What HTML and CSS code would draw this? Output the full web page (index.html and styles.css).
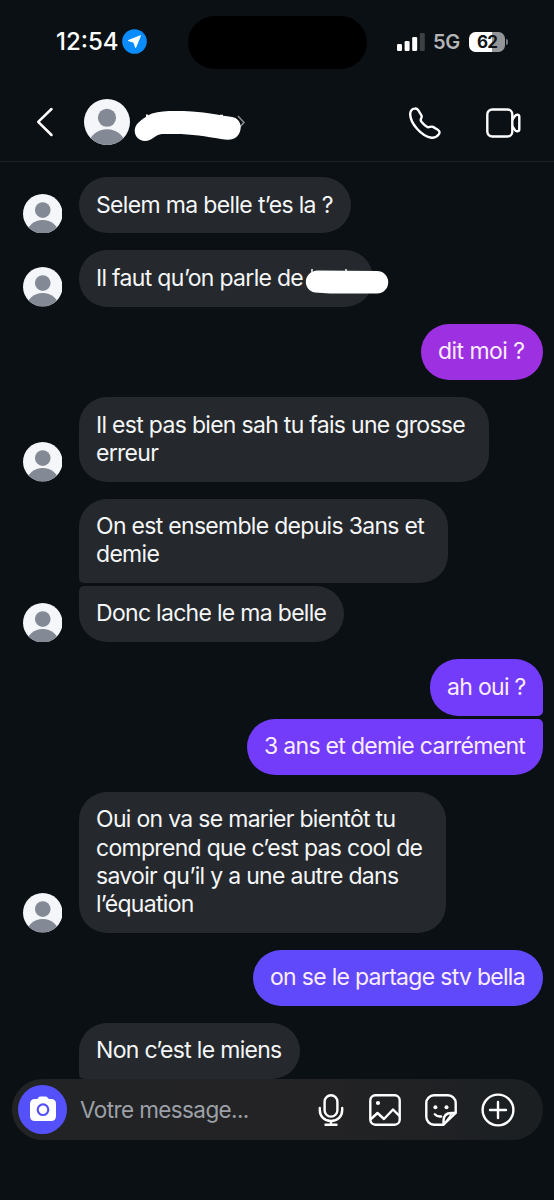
FILE: index.html
```html
<!DOCTYPE html>
<html lang="fr">
<head>
<meta charset="utf-8">
<title>Messages</title>
<link rel="stylesheet" href="styles.css">
</head>
<body>
<svg class="defs" width="0" height="0" aria-hidden="true">
  <symbol id="avatar" viewBox="0 0 40 40">
    <clipPath id="disc"><circle cx="20" cy="20" r="20"/></clipPath>
    <g clip-path="url(#disc)">
      <rect width="40" height="40" fill="#f4f6f9"/>
      <circle cx="20" cy="16.3" r="7.900" fill="#848996"/>
      <ellipse cx="20" cy="40" rx="16" ry="13.600" fill="#848996"/>
    </g>
  </symbol>
</svg>
<div class="screen">
  <div class="status">
    <span class="time">12:54</span>
    <svg class="location" viewBox="0 0 25 25"><circle cx="12.5" cy="12.5" r="12.3" fill="#0a8cff"/><path d="M18.500 6.700 13.600 18.600 11.900 13.300 6.200 11.600Z" fill="#fff" stroke="#fff" stroke-width="1" stroke-linejoin="round"/></svg>
    <div class="island"></div>
    <svg class="signal" viewBox="0 0 28 18"><g fill="#fff"><rect y="11" width="5" height="7" rx="1.3"/><rect x="7.6" y="8" width="5" height="10" rx="1.3"/><rect x="15.2" y="4" width="5" height="14" rx="1.3"/></g><rect x="22.8" width="5" height="18" rx="1.3" fill="#3d4144"/></svg>
    <span class="network">5G</span>
    <div class="battery">62</div><div class="battery-tip"></div>
  </div>
  <header class="header">
    <svg class="back" viewBox="0 0 18 30"><path d="M15.500 2 2.200 14.800 15.500 28" fill="none" stroke="#fff" stroke-width="2.500" stroke-linecap="round" stroke-linejoin="round"/></svg>
    <svg class="avatar-large"><use href="#avatar"/></svg>
    <svg class="name" viewBox="0 0 114 34"><path d="m104 8 6 6.500-6 6.500" fill="none" stroke="#8b8e91" stroke-width="1.500"/><path d="M11 33C1 33-2.500 21.500 4 15 9 10.500 12 8.500 18 5.500 29 2.500 43 3 58 3.500 74 4.500 86 7.500 98 9 108 10.500 109 22.500 103 28.500 99 32.500 93 32 87 31 72 28.500 58 26 41 26H28C21 26.500 18 33 11 33Z" fill="#fff"/><path d="M12 6.500h2v3h-2zM86 6.700h3v2h-3z" fill="#fff"/></svg>
    <svg class="phone" viewBox="0 0 32 32"><path d="M5.700 1.500C7.200 1.300 8.400 1.900 9.200 3.200L12.400 8.300C13.500 10.100 11.700 11.400 11.700 13.100 11.800 14.700 17 20 18.900 20.300 20.700 20.500 22 18.900 24 19.900L28.800 22.700C30.400 23.700 31 25.500 29.900 27.200 28.200 29.700 25.700 31.100 22.600 30.700 12.500 29.500 1 16 1.200 6.800 1.300 4.200 3 1.700 5.700 1.500Z" fill="none" stroke="#fff" stroke-width="2.400" stroke-linejoin="round"/></svg>
    <svg class="video" viewBox="0 0 35 30"><g fill="none" stroke="#fff" stroke-width="2.400" stroke-linejoin="round"><rect x="1.300" y="1.500" width="25" height="27" rx="5"/><path d="M26.300 11.800 29 7.900c1.400-1.900 4.300-1.500 4.300.9v12.400c0 2.400-2.900 2.800-4.300.9l-2.700-3.900"/></g></svg>
  </header>
  <main class="chat">
    <div class="row"><svg class="avatar"><use href="#avatar"/></svg><div class="bubble w1">Selem ma belle t’es la ?</div></div>
    <div class="row"><svg class="avatar"><use href="#avatar"/></svg><div class="bubble w2">Il faut qu’on parle de<svg class="mask" viewBox="0 0 84 25"><path d="M7 0v5M41 0v4" stroke="#eee" stroke-width="1.600"/><path d="M12 1.500 72 2A11 11 0 0 1 72 24.500H25L10 23.500C-3 21-2 3 12 1.500Z" fill="#fff"/></svg></div></div>
    <div class="row sent"><div class="bubble violet w3">dit moi ?</div></div>
    <div class="row"><svg class="avatar"><use href="#avatar"/></svg><div class="bubble w4">Il est pas bien sah tu fais une grosse<br>erreur</div></div>
    <div class="row first"><div class="bubble w5">On est ensemble depuis 3ans et<br>demie</div></div>
    <div class="row last"><svg class="avatar"><use href="#avatar"/></svg><div class="bubble w6">Donc lache le ma belle</div></div>
    <div class="row sent first"><div class="bubble w7">ah oui ?</div></div>
    <div class="row sent last"><div class="bubble w8">3 ans et demie carrément</div></div>
    <div class="row"><svg class="avatar"><use href="#avatar"/></svg><div class="bubble w9">Oui on va se marier bientôt tu<br>comprend que c’est pas cool de<br>savoir qu’il y a une autre dans<br>l’équation</div></div>
    <div class="row sent"><div class="bubble blue w10">on se le partage stv bella</div></div>
    <div class="row first"><div class="bubble w11">Non c’est le miens</div></div>
  </main>
  <footer class="composer">
    <div class="camera"><svg viewBox="0 0 26 26"><path fill="#fff" fill-rule="evenodd" d="M8.500 1.500Q9 .5 10.500.5h5Q17 .5 17.500 1.500T19.500 3H21Q26 3 26 8V20Q26 25 21 25H5Q0 25 0 20V8Q0 3 5 3H6.500Q8 3 8.500 1.500ZM13 7.300a6.400 6.400 0 1 0 0 12.800 6.400 6.400 0 0 0 0-12.800Z"/><circle cx="13" cy="13.700" r="4.200" fill="#fff"/></svg></div>
    <span class="placeholder">Votre message...</span>
    <svg class="mic" viewBox="0 0 26 32"><g fill="none" stroke="#fff" stroke-width="2.400" stroke-linecap="round"><rect x="6.600" y="1.200" width="12.800" height="21.400" rx="6.400"/><path d="M1.800 14v2c0 6.500 4.500 11 11.200 11s11.200-4.500 11.200-11v-2M13 27v3.500M7.500 30.700h11"/></g></svg>
    <svg class="picture" viewBox="0 0 32 32"><g fill="none" stroke="#fff" stroke-width="2.400" stroke-linejoin="round" stroke-linecap="round"><rect x="1.300" y="1.300" width="29.400" height="29.400" rx="5"/><path d="m2 25 6.500-6 6.500 6 9-9.500 6 6"/></g><circle cx="9" cy="9" r="2.100" fill="#fff"/></svg>
    <svg class="sticker" viewBox="0 0 32 32"><g fill="none" stroke="#fff" stroke-width="2.400" stroke-linejoin="round" stroke-linecap="round"><path d="M18.500 30.700H9a7.700 7.700 0 0 1-7.700-7.700V9A7.700 7.700 0 0 1 9 1.300h14A7.700 7.700 0 0 1 30.700 9v10L18.500 30.700V27c0-5 3-8 8-8h4.200"/><path d="M18.700 30c3-3.500 5-5 8-10.500" stroke-width="1.600"/><path d="M9.800 20.300c1.600 1.700 3.800 2.500 6.300 2.200"/></g><circle cx="10.400" cy="13.300" r="2" fill="#fff"/><circle cx="21.500" cy="13.300" r="2" fill="#fff"/></svg>
    <svg class="plus" viewBox="0 0 34 34"><g fill="none" stroke="#fff" stroke-width="2.400" stroke-linecap="round"><circle cx="17" cy="17" r="15.400"/><path d="M9 17h16M17 9v16"/></g></svg>
  </footer>
</div>
</body>
</html>
```
FILE: styles.css
```css
* { box-sizing: border-box; }
body { margin: 0; background: #0b1014; font-family: Inter, "Liberation Sans", sans-serif; color: #f5f6f7; }
svg { display: block; flex: none; }
.defs { position: absolute; }
.screen { width: 554px; height: 1200px; overflow: hidden; display: flex; flex-direction: column; background: #0b1014; }

.status { height: 83px; flex: none; display: flex; align-items: center; padding-left: 56px; }
.time { width: 66px; font-size: 24px; line-height: 30px; font-weight: 500; letter-spacing: 0; color: #fff; white-space: nowrap; }
.location { width: 25px; height: 25px; }
.island { width: 179px; height: 53px; margin-left: 41px; border-radius: 27px; background: #000; margin-top: 1px; }
.signal { width: 28px; height: 18px; margin-left: 30px; }
.network { width: 36px; margin-left: 8px; font-size: 20px; font-weight: 600; letter-spacing: -.4px; color: #b3b5b7; }
.battery { width: 36px; height: 20px; border-radius: 6.500px; background: linear-gradient(90deg, #fff 63%, #939597 63%); color: #101417; font-size: 17px; font-weight: 700; line-height: 20px; text-align: center; letter-spacing: -.8px; }
.battery-tip { width: 2px; height: 6px; margin-left: 1px; border-radius: 0 2px 2px 0; background: #77797b; }

.header { height: 79px; flex: none; display: flex; align-items: center; padding-left: 36px; border-bottom: 1px solid #1d2226; }
.back { width: 18px; height: 30px; }
.avatar-large { width: 46px; height: 46px; margin-left: 30px; }
.name { width: 114px; height: 34px; margin: 5px 0 0 4px; }
.phone { width: 32px; height: 32px; margin: 1px 0 0 160.500px; }
.video { width: 35px; height: 30px; margin: 1px 0 0 45.500px; }

.chat { height: 917px; flex: none; padding: 15.200px 11px 0 22px; display: flex; flex-direction: column; }
.row { display: flex; align-items: flex-end; gap: 17px; margin-bottom: 17px; padding-left: 57px; }
.row:has(.avatar) { padding-left: 0; }
.row.first { margin-bottom: 3px; }
.row.sent { justify-content: flex-end; }
.avatar { width: 39.500px; height: 39.500px; margin-left: .5px; }
.bubble { position: relative; padding: 13.500px 0 14.650px 17px; border-radius: 28px; background: #25292d; font-size: 23px; line-height: 28.150px; letter-spacing: -.7px; white-space: nowrap; }
.sent .bubble { background: #723cfa; color: #fcedff; }
.sent .violet { background: #9d31e1; }
.sent .blue { background: #6049fb; }
.first .bubble { border-bottom-left-radius: 5px; }
.last .bubble { border-top-left-radius: 5px; }
.sent.first .bubble { border-radius: 28px 28px 5px 28px; }
.sent.last .bubble { border-radius: 28px 5px 28px 28px; }
.mask { position: absolute; left: 226px; top: 18.500px; width: 84px; height: 25px; }
.w1 { width: 272px; letter-spacing: -.66px; }
.w2 { width: 294px; }
.w3 { width: 122px; letter-spacing: -.55px; }
.w4 { width: 410px; }
.w5 { width: 369px; }
.w6 { width: 265px; }
.w7 { width: 113px; }
.w8 { width: 296px; }
.w9 { width: 367px; }
.w10 { width: 290px; }
.w11 { width: 221px; }

.composer { width: 531px; height: 61px; flex: none; margin-left: 12px; padding-left: 6px; display: flex; align-items: center; border-radius: 31px; background: linear-gradient(90deg, #222325 0%, #232325 60%, #1b1f22 100%); }
.camera { width: 49px; height: 49px; flex: none; border-radius: 50%; background: #5451fa; display: flex; align-items: center; justify-content: center; }
.camera svg { width: 26px; height: 26px; margin-top: -1px; }
.placeholder { width: 239px; padding-left: 13px; font-size: 22.500px; line-height: 28px; letter-spacing: -.6px; color: #9da0a8; white-space: nowrap; }
.mic { width: 26px; height: 32px; margin-left: 12px; }
.picture { width: 32px; height: 32px; margin-left: 24.500px; }
.sticker { width: 32px; height: 32px; margin-left: 24.500px; }
.plus { width: 34px; height: 34px; margin-left: 24px; }
```
